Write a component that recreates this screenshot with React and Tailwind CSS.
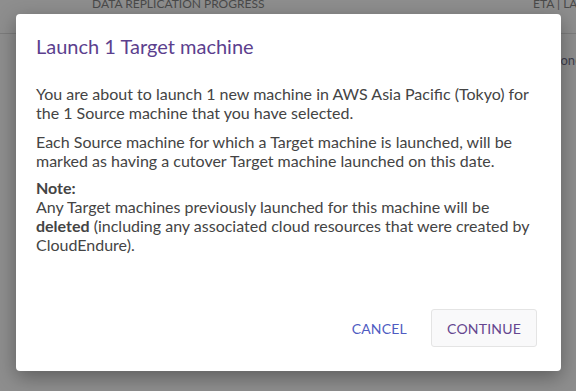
import React from 'react';

const App = () => {
  return (
    <div
      className="relative w-[576px] h-[391px] overflow-hidden bg-[#8e8e8e]"
      style={{ fontFamily: 'Lato, "Open Sans", sans-serif' }}
    >
      {/* page behind the overlay */}
      <div className="flex h-[34px] items-start border-b border-[#7c7c7c] text-[12px] leading-[12px] text-[#4a4a4a]">
        <span className="ml-[92px] -mt-[2px]">DATA REPLICATION PROGRESS</span>
        <span className="ml-auto mr-[-10px] -mt-[2px]">ETA | LAG</span>
      </div>
      <div className="flex justify-end pt-[17px] text-[13px] text-[#3f3f4f]">
        <span className="mr-[-6px]">one</span>
      </div>

      {/* dialog */}
      <div className="absolute left-[16px] top-[14px] w-[545px] h-[357px] rounded-[4px] bg-white shadow-[0_6px_20px_rgba(0,0,0,0.35)] flex flex-col">
        <div className="px-[20px] pt-[20px]">
          <h2 className="text-[20px] leading-[24px] text-[#5c3f8e]">Launch 1 Target machine</h2>
        </div>
        <div className="pl-[20px] pr-[18px] pt-[26px] text-[16px] leading-[19px] text-[#444444]">
          <p>
            You are about to launch 1 new machine in AWS Asia Pacific (Tokyo) for the 1 Source machine that you have selected.
          </p>
          <p className="mt-[10px]">
            Each Source machine for which a Target machine is launched, will be marked as having a cutover Target machine launched on this date.
          </p>
          <p className="mt-[8px] font-bold">Note:</p>
          <p>
            Any Target machines previously launched for this machine will be <b className="font-bold">deleted</b> (including any associated cloud resources that were created by CloudEndure).
          </p>
        </div>
        <div className="mt-auto flex items-center justify-end gap-[14px] pb-[24px] pr-[24px]">
          <button className="px-[10px] h-[38px] text-[14px] text-[#4f5cc2] tracking-[0.2px]">CANCEL</button>
          <button className="w-[106px] h-[38px] rounded-[3px] border border-[#e4e4e4] bg-[#f9f9fa] text-[14px] text-[#65468f] tracking-[0.2px]">
            CONTINUE
          </button>
        </div>
      </div>
    </div>
  );
};

export default App;
